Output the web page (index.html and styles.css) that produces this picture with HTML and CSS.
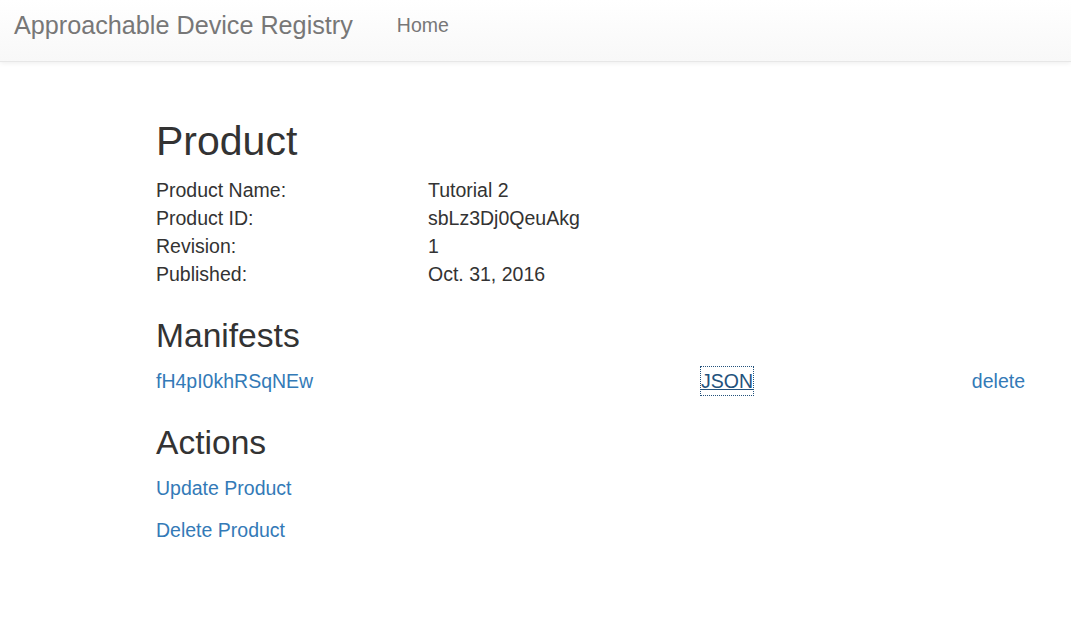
FILE: index.html
```html
<!DOCTYPE html>
<html lang="en">
<head>
<meta charset="utf-8">
<title>Product - Approachable Device Registry</title>
<link rel="stylesheet" href="styles.css">
</head>
<body>
<nav class="navbar">
  <a class="brand" href="#">Approachable Device Registry</a>
  <a class="nav-link" href="#">Home</a>
</nav>
<main class="content">
  <h2 class="title">Product</h2>
  <dl class="details">
    <dt>Product Name:</dt><dd>Tutorial 2</dd>
    <dt>Product ID:</dt><dd>sbLz3Dj0QeuAkg</dd>
    <dt>Revision:</dt><dd>1</dd>
    <dt>Published:</dt><dd>Oct. 31, 2016</dd>
  </dl>
  <h3 class="section">Manifests</h3>
  <div class="manifest-row">
    <a href="#">fH4pI0khRSqNEw</a>
    <a href="#" class="json-link">JSON</a>
    <a href="#" class="delete-link">delete</a>
  </div>
  <h3 class="section">Actions</h3>
  <p class="action"><a href="#">Update Product</a></p>
  <p class="action"><a href="#">Delete Product</a></p>
</main>
</body>
</html>
```
FILE: styles.css
```css
* { box-sizing: border-box; }
html, body { margin: 0; padding: 0; }
body {
  font-family: "Liberation Sans", Helvetica, Arial, sans-serif;
  font-size: 19.5px;
  line-height: 28px;
  color: #333;
  background: #fff;
}
a { color: #337ab7; text-decoration: none; }

.navbar {
  display: flex;
  align-items: flex-start;
  height: 62px;
  padding: 11px 0 0 14px;
  background-image: linear-gradient(to bottom, #fff 0, #f8f8f8 100%);
  border-bottom: 1px solid #e7e7e7;
  box-shadow: inset 0 1px 0 rgba(255,255,255,.15), 0 1px 5px rgba(0,0,0,.075);
}
.brand {
  color: #777;
  font-size: 25.2px;
  line-height: 28px;
  margin-right: 44px;
}
.nav-link {
  color: #777;
  font-size: 19.5px;
  line-height: 28px;
}

.content {
  padding: 56px 46px 0 156px;
}
.title {
  margin: 0 0 12px;
  font-size: 41px;
  line-height: 46px;
  font-weight: 500;
  color: #333;
}
.details {
  display: grid;
  grid-template-columns: 272px 1fr;
  margin: 0;
}
.details dt, .details dd { margin: 0; font-weight: normal; }

.section {
  margin: 30px 0 12px;
  font-size: 33.6px;
  line-height: 1.1;
  font-weight: 500;
  color: #333;
}
.manifest-row {
  display: grid;
  grid-template-columns: 545px 1fr auto;
}
.json-link {
  justify-self: start;
  color: #23527c;
  text-decoration: underline;
  outline: 1px dotted #23527c;
  outline-offset: 0;
}
.action { margin: 0 0 14px; }
```
